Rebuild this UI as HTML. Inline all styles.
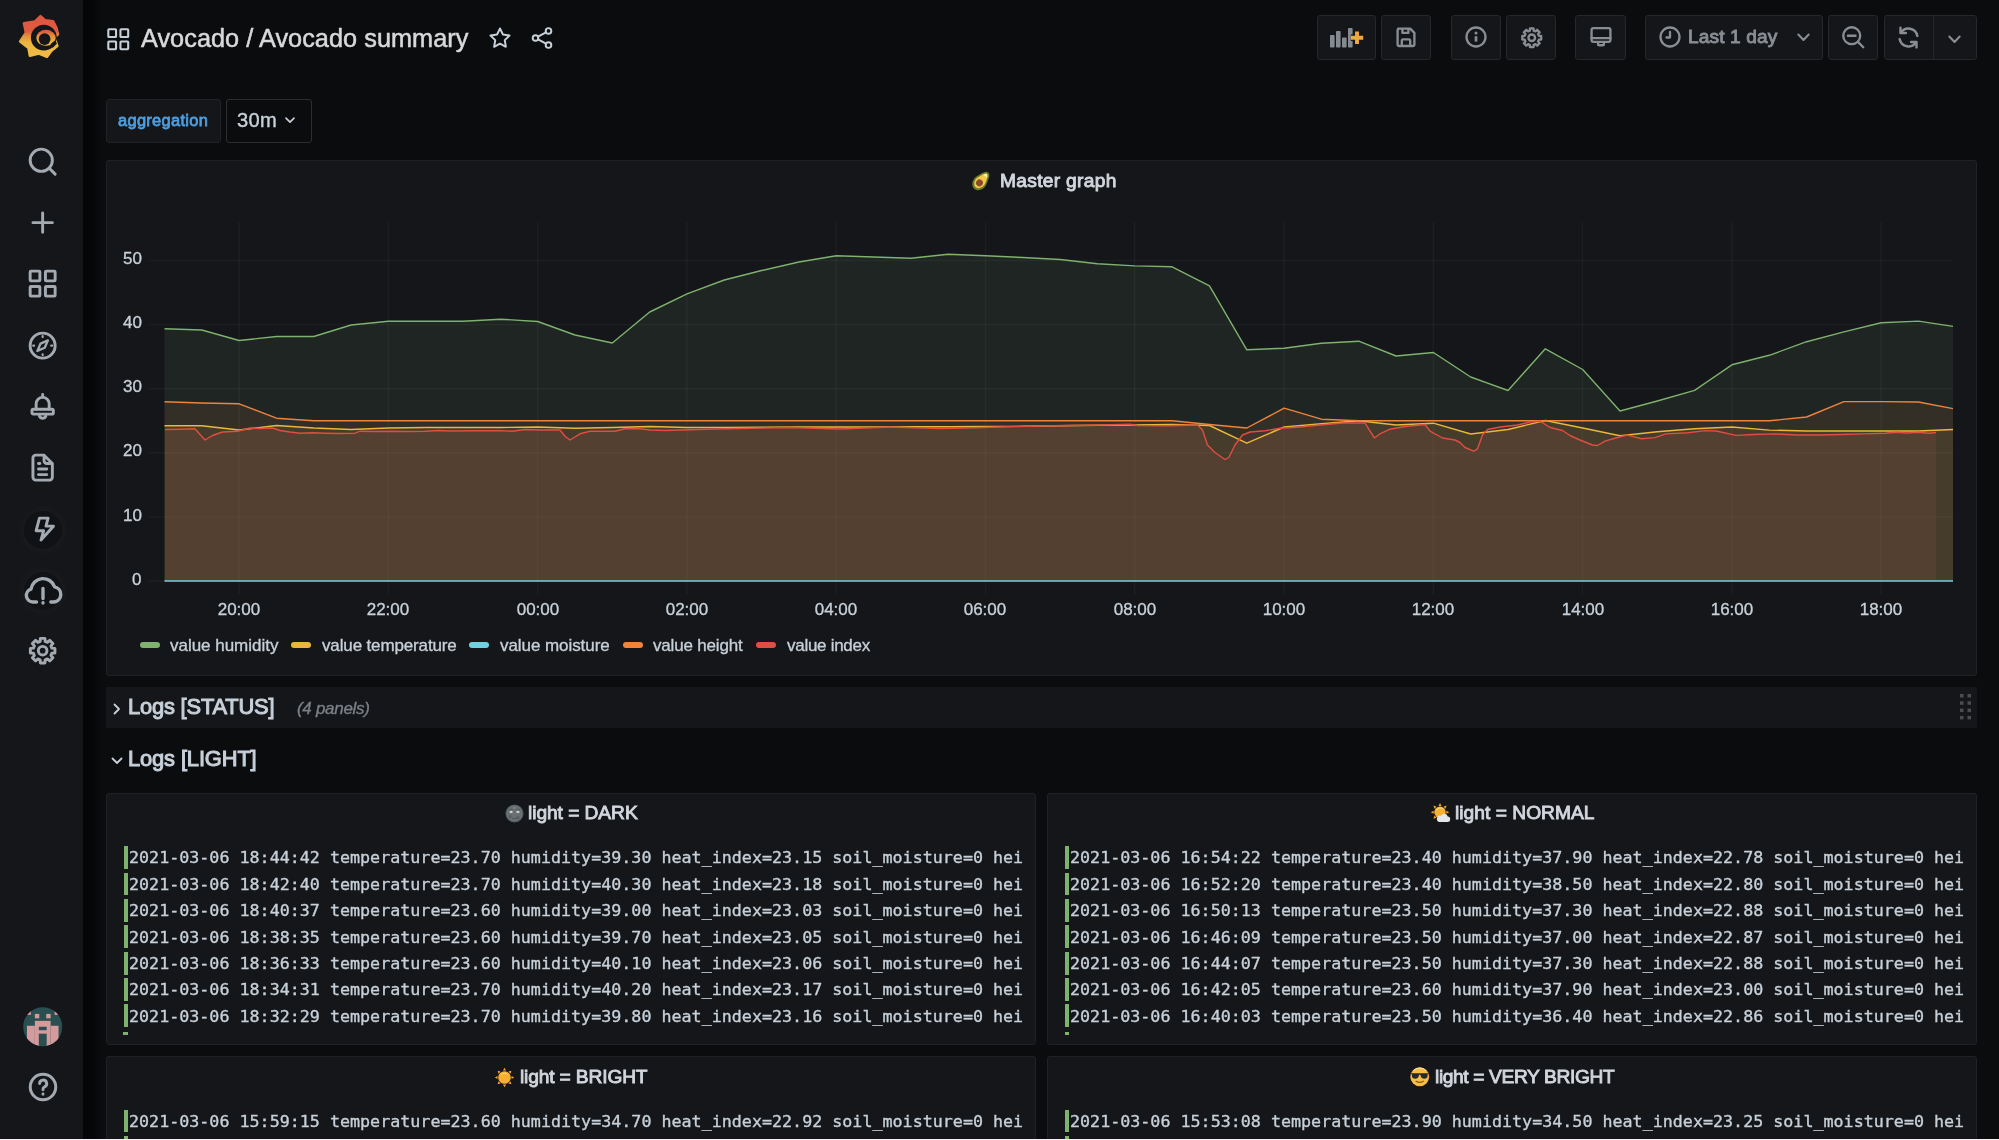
<!DOCTYPE html>
<html lang="en"><head><meta charset="utf-8"><title>Avocado / Avocado summary - Grafana</title>
<style>
*{box-sizing:border-box;margin:0;padding:0}
html,body{width:1999px;height:1140px;overflow:hidden;background:#0b0c0e;}
body{position:relative;font-family:"Liberation Sans", "DejaVu Sans", sans-serif;color:#c7d0d9;-webkit-font-smoothing:antialiased}
.abs{position:absolute}
#side{position:absolute;left:0;top:0;width:83px;height:1140px;background:#141619}
#shadow{position:absolute;left:83px;top:0;width:19px;height:1140px;background:linear-gradient(90deg,#050608 0,#050608 50%,#0b0c0e 100%)}
.panel{position:absolute;background:#141619;border:1px solid #1f2125;border-radius:3px}
.btn{position:absolute;top:15.2px;height:44.4px;background:#141619;border:1px solid #25272b;border-radius:3px}
.t{position:absolute;white-space:pre;line-height:1;will-change:transform}
svg{position:absolute;overflow:visible}
.ic{fill:none;stroke-linecap:round;stroke-linejoin:round}
.logrow{position:absolute;left:0;height:22.4px;white-space:pre;font-family:"DejaVu Sans Mono", "Liberation Mono", monospace;font-size:16.71px;line-height:22.4px;color:#c7d0d9;letter-spacing:0}
.logrow i{position:absolute;left:0.2px;top:-0.3px;width:4.4px;height:22.8px;background:#7eb26d}
.logrow span{position:absolute;left:5.6px;top:-0.1px;will-change:transform;-webkit-text-stroke:0.35px #c7d0d9}
</style></head>
<body>
<div id="side"></div><div id="shadow"></div>
<div class="abs" style="left:24px;top:511px;width:38px;height:38px;border-radius:50%;background:#111215;box-shadow:0 0 8px 4px rgba(255,255,255,0.025)"></div>
<div class="abs" style="left:24px;top:572px;width:38px;height:38px;border-radius:50%;background:#111215;box-shadow:0 0 8px 4px rgba(255,255,255,0.025)"></div>
<svg class="ic" style="left:26.2px;top:145.2px" width="33.3" height="33.3" viewBox="0 0 24 24" stroke="#a3aab2" stroke-width="2.1" ><circle cx="11" cy="11" r="8"/><path d="M16.8 16.8L21 21"/></svg>
<svg class="ic" style="left:26.2px;top:206.2px" width="33.3" height="33.3" viewBox="0 0 24 24" stroke="#a3aab2" stroke-width="2.1" ><path d="M12 5v14M5 12h14"/></svg>
<svg class="ic" style="left:26.2px;top:267.4px" width="33.3" height="33.3" viewBox="0 0 24 24" stroke="#a3aab2" stroke-width="2.1" ><rect x="3" y="3" width="7" height="7" rx="0.6"/><rect x="14" y="3" width="7" height="7" rx="0.6"/><rect x="3" y="14" width="7" height="7" rx="0.6"/><rect x="14" y="14" width="7" height="7" rx="0.6"/></svg>
<svg class="ic" style="left:26.2px;top:328.5px" width="33.3" height="33.3" viewBox="0 0 24 24" stroke="#a3aab2" stroke-width="2.1" ><circle cx="12" cy="12" r="9"/><path d="M15.8 8.2l-2.3 5.3-5.3 2.3 2.3-5.3z" stroke-width="1.7"/><path d="M12 5.2v.6M12 18.2v.6M5.2 12h.6M18.2 12h.6" stroke-width="1.6"/></svg>
<svg class="ic" style="left:26.2px;top:389.6px" width="33.3" height="33.3" viewBox="0 0 24 24" stroke="#a3aab2" stroke-width="2.1" ><path d="M7.300 13.800V10a4.700 4.700 0 0 1 9.400 0v3.800M12 5.200V3.200M9.700 18.800a2.500 2.500 0 0 0 4.600 0"/><rect x="4.300" y="13.900" width="15.400" height="3.500" rx="1"/></svg>
<svg class="ic" style="left:26.2px;top:450.7px" width="33.3" height="33.3" viewBox="0 0 24 24" stroke="#a3aab2" stroke-width="2.1" ><path d="M13 3H7a2 2 0 0 0-2 2v14a2 2 0 0 0 2 2h10a2 2 0 0 0 2-2V9zM13 3v4a2 2 0 0 0 2 2h4M9 13h6M9 17h6M9 9h1"/></svg>
<svg class="ic" style="left:26.2px;top:511.8px" width="33.3" height="33.3" viewBox="0 0 24 24" stroke="#a3aab2" stroke-width="2.1" ><path d="M9.7 4.4H15.9L14.4 10.2H19.8L10.8 20.2 12.700 13.500H7.300z"/></svg>
<svg class="ic" style="left:21px;top:576px" width="44" height="32" viewBox="0 0 44 32" stroke="#a3aab2" stroke-width="3.4"><path d="M15.500 26H11.800a6.600 6.600 0 0 1-1.800-12.900a12.200 12.200 0 0 1 23.600-2.300a7.700 7.700 0 0 1-.600 15.200H29.800M22 12.500v10M22 26.800v.2"/></svg>
<svg class="ic" style="left:26.2px;top:634.0px" width="33.3" height="33.3" viewBox="0 0 24 24" stroke="#a3aab2" stroke-width="2.1" ><circle cx="12" cy="12" r="3.1"/><path d="M10.21 5.34 L10.36 3.15 L13.64 3.15 L13.79 5.34 L15.45 6.02 L17.10 4.58 L19.42 6.90 L17.98 8.55 L18.66 10.21 L20.85 10.36 L20.85 13.64 L18.66 13.79 L17.98 15.45 L19.42 17.10 L17.10 19.42 L15.45 17.98 L13.79 18.66 L13.64 20.85 L10.36 20.85 L10.21 18.66 L8.55 17.98 L6.90 19.42 L4.58 17.10 L6.02 15.45 L5.34 13.79 L3.15 13.64 L3.15 10.36 L5.34 10.21 L6.02 8.55 L4.58 6.90 L6.90 4.58 L8.55 6.02Z"/></svg>
<svg class="ic" style="left:26.1px;top:1069.5px" width="34.0" height="34.0" viewBox="0 0 24 24" stroke="#a3aab2" stroke-width="2.1" ><circle cx="12" cy="12" r="9"/><path d="M9.6 9.600a2.500 2.500 0 1 1 3.500 2.300c-.700.300-1.100.900-1.100 1.600v.400M12 17v.200"/></svg>
<svg style="left:23.4px;top:1007.4px" width="39.5" height="39.5" viewBox="0 0 40 40">
<defs><clipPath id="avc"><circle cx="20" cy="20" r="19.8"/></clipPath></defs>
<g clip-path="url(#avc)"><rect width="40" height="40" fill="#2a4f50"/>
<rect x="4" y="19" width="8" height="21" fill="#d59a9c"/><rect x="28" y="19" width="8" height="21" fill="#d59a9c"/>
<rect x="12" y="14" width="16" height="26" fill="#d59a9c"/><rect x="16" y="20" width="8" height="3.500" fill="#2a4f50"/><rect x="16" y="27" width="8" height="13" fill="#2a4f50"/>
<rect x="12" y="7" width="4.500" height="4.500" fill="#d59a9c"/><rect x="23.500" y="7" width="4.500" height="4.500" fill="#d59a9c"/>
<rect x="4" y="4" width="4" height="4" fill="#d59a9c"/><rect x="32" y="4" width="4" height="4" fill="#d59a9c"/>
</g></svg>
<svg style="left:10px;top:8px" width="60" height="60" viewBox="0 0 60 60"><defs><linearGradient id="lg" gradientUnits="userSpaceOnUse" x1="0" y1="7" x2="0" y2="50"><stop offset="0" stop-color="#de5640"/><stop offset="0.38" stop-color="#df5c40"/><stop offset="0.5" stop-color="#e3923d"/><stop offset="0.64" stop-color="#ecb543"/><stop offset="1" stop-color="#f0bc43"/></linearGradient></defs><path d="M30.5 8.2 L35.3 12.4 L43.0 13.2 L46.3 19.5 L48.0 26.2 L44.2 29.3 L47.3 38.0 L41.4 42.8 L37.0 48.8 L28.9 45.6 L19.9 47.7 L18.5 40.0 L10.2 33.4 L15.9 24.8 L14.0 15.3 L24.8 13.6Z" fill="url(#lg)" stroke="url(#lg)" stroke-width="2.6" stroke-linejoin="round"/><circle cx="33.8" cy="29.7" r="12.9" fill="#141619"/><ellipse cx="36.0" cy="29.8" rx="9.7" ry="8" fill="url(#lg)"/><circle cx="34.6" cy="31.1" r="5.9" fill="#141619"/><path d="M40.5 36l4.500-3.500 2 3-4.500 4.500z" fill="#141619"/></svg>
<svg class="ic" style="left:104.800px;top:25.500px" width="26.500" height="26.500" viewBox="0 0 24 24" stroke="#c7d0d9" stroke-width="1.9"><rect x="3" y="3" width="7" height="7" rx="0.6"/><rect x="14" y="3" width="7" height="7" rx="0.6"/><rect x="3" y="14" width="7" height="7" rx="0.6"/><rect x="14" y="14" width="7" height="7" rx="0.6"/></svg>
<div class="t" id="title" style="left:141.00px;top:26.48px;font-size:25.30px;-webkit-text-stroke:0.51px #d8d9da;color:#d8d9da;letter-spacing:0.029px;">Avocado / Avocado summary</div>
<svg class="ic" style="left:486.500px;top:24.500px" width="26" height="26" viewBox="0 0 24 24" stroke="#c7d0d9" stroke-width="1.800"><path d="M12 3.200l2.700 5.600 6.100.900-4.400 4.300 1 6.100L12 17.200l-5.400 2.900 1-6.100L3.200 9.700l6.100-.900z"/></svg>
<svg class="ic" style="left:528.500px;top:24.500px" width="26" height="26" viewBox="0 0 24 24" stroke="#c7d0d9" stroke-width="1.800"><circle cx="18" cy="5.500" r="2.600"/><circle cx="6" cy="12" r="2.600"/><circle cx="18" cy="18.500" r="2.600"/><path d="M8.300 10.800l7.400-4M8.300 13.200l7.400 4"/></svg>
<div class="btn" style="left:1317.3px;width:58.7px;"></div>
<div class="btn" style="left:1381.3px;width:49.9px;"></div>
<div class="btn" style="left:1451.0px;width:49.6px;"></div>
<div class="btn" style="left:1506.2px;width:50.0px;"></div>
<div class="btn" style="left:1575.3px;width:50.5px;"></div>
<div class="btn" style="left:1645.2px;width:177.8px;"></div>
<div class="btn" style="left:1828.3px;width:49.7px;"></div>
<div class="btn" style="left:1884.0px;width:92.7px;"></div>
<div class="abs" style="left:1932.500px;top:16px;width:1px;height:43px;background:#25272b"></div>
<svg style="left:1329.800px;top:27.500px" width="34" height="20" viewBox="0 0 34 20"><g fill="#858a90"><rect x="0" y="7" width="4.600" height="12.500" rx="0.800"/><rect x="6" y="3" width="4.600" height="16.500" rx="0.800"/><rect x="12" y="9.500" width="4.600" height="10" rx="0.800"/><rect x="18" y="0" width="4.600" height="19.500" rx="0.800"/></g><path d="M27 3.600v12.400M20.800 9.800h12.400" stroke="#141619" stroke-width="6.400" fill="none"/><path d="M27 3.600v12.400M20.800 9.800h12.400" stroke="#f0a93c" stroke-width="3.900" fill="none"/></svg>
<svg class="ic" style="left:1394.3px;top:25.3px" width="24.0" height="24.0" viewBox="0 0 24 24" stroke="#898e94" stroke-width="1.95" ><path d="M5.500 5h10l3.500 3.500V18a1.500 1.500 0 0 1-1.500 1.500h-11A1.500 1.500 0 0 1 5 18V6.500A1.500 1.500 0 0 1 6.500 5zM9 5v3.500h5V5M8.500 19.500V15a1 1 0 0 1 1-1h5a1 1 0 0 1 1 1v4.500" transform="translate(-2.400 -2.400) scale(1.200)"/></svg>
<svg class="ic" style="left:1463.8px;top:25.4px" width="24.0" height="24.0" viewBox="0 0 24 24" stroke="#898e94" stroke-width="2.3" ><circle cx="12" cy="12" r="9.500"/><path d="M12 11.200v5.400" stroke-width="2.700" stroke-linecap="butt"/><circle cx="12" cy="8.100" r="1.500" fill="#898e94" stroke="none"/></svg>
<svg class="ic" style="left:1518.5px;top:24.6px" width="25.5" height="25.5" viewBox="0 0 24 24" stroke="#898e94" stroke-width="2.25" ><circle cx="12" cy="12" r="3.1"/><path d="M10.21 5.34 L10.36 3.15 L13.64 3.15 L13.79 5.34 L15.45 6.02 L17.10 4.58 L19.42 6.90 L17.98 8.55 L18.66 10.21 L20.85 10.36 L20.85 13.64 L18.66 13.79 L17.98 15.45 L19.42 17.10 L17.10 19.42 L15.45 17.98 L13.79 18.66 L13.64 20.85 L10.36 20.85 L10.21 18.66 L8.55 17.98 L6.90 19.42 L4.58 17.10 L6.02 15.45 L5.34 13.79 L3.15 13.64 L3.15 10.36 L5.34 10.21 L6.02 8.55 L4.58 6.90 L6.90 4.58 L8.55 6.02Z"/></svg>
<svg class="ic" style="left:1587.5px;top:24.4px" width="26.0" height="26.0" viewBox="0 0 24 24" stroke="#898e94" stroke-width="2.15" ><rect x="3.300" y="3.800" width="17.400" height="12.700" rx="1.700"/><path d="M3.300 13.100h17.400M9.300 16.700v1.900a1 1 0 0 0 1 1h3.400a1 1 0 0 0 1-1v-1.900"/></svg>
<svg class="ic" style="left:1657.8px;top:25.4px" width="24.0" height="24.0" viewBox="0 0 24 24" stroke="#898e94" stroke-width="2.3" ><circle cx="12" cy="12" r="9.500"/><path d="M12 7v5.500H8.500"/></svg>
<div class="t" id="last" style="left:1688.00px;top:27.03px;font-size:19.10px;-webkit-text-stroke:0.90px #898e94;color:#898e94;letter-spacing:0.132px;">Last 1 day</div>
<svg class="ic" style="left:1797px;top:33px" width="13" height="9" viewBox="0 0 13 9" stroke="#898e94" stroke-width="2"><path d="M1.300 1.500l5.200 5.500 5.200-5.500"/></svg>
<svg class="ic" style="left:1841.0px;top:25.1px" width="24.5" height="24.5" viewBox="0 0 24 24" stroke="#898e94" stroke-width="2.3" ><circle cx="10.500" cy="10.500" r="8.300"/><path d="M6.800 10.500h7.400M16.600 16.600L21.800 21.800"/></svg>
<svg class="ic" style="left:1895.8px;top:24.6px" width="25.0" height="25.0" viewBox="0 0 24 24" stroke="#898e94" stroke-width="2.3" ><path d="M20.500 10.500A8.700 8.700 0 0 0 4.600 7.500M4.300 2.500v5.200h5.200M3.500 13.500a8.700 8.700 0 0 0 15.900 3M19.700 21.500v-5.200h-5.200"/></svg>
<svg class="ic" style="left:1948px;top:34.500px" width="13" height="9" viewBox="0 0 13 9" stroke="#898e94" stroke-width="2"><path d="M1.300 1.500l5.200 5.500 5.200-5.500"/></svg>
<div class="abs" style="left:106px;top:99px;width:114.500px;height:43.500px;background:#141619;border:1px solid #202226;border-radius:3px"></div>
<div class="t" id="aggr" style="left:117.60px;top:112.49px;font-size:16.43px;-webkit-text-stroke:0.77px #4e9fe0;color:#4e9fe0;letter-spacing:0.305px;">aggregation</div>
<div class="abs" style="left:226.400px;top:99px;width:85.800px;height:43.500px;background:#0b0c0e;border:1px solid #2c2e31;border-radius:3px"></div>
<div class="t" id="v30" style="left:237.30px;top:110.28px;font-size:20.10px;-webkit-text-stroke:0.40px #c7d0d9;color:#c7d0d9;letter-spacing:0.353px;">30m</div>
<svg class="ic" style="left:285px;top:117px" width="10" height="7" viewBox="0 0 10 7" stroke="#c7d0d9" stroke-width="1.700"><path d="M1 1.200l4 4 4-4"/></svg>
<div class="panel" style="left:106px;top:160px;width:1871px;height:515.500px"></div>
<svg style="left:969.500px;top:168.500px" width="22.500" height="23.500" viewBox="0 0 21 22">
<g transform="rotate(40 10.5 11)"><path d="M10.5 0.800c2.400 0 3.500 2.600 4.400 5.400 1.300 3.600 2.600 5.800 1.700 9.300-.900 3.400-3.300 5.500-6.100 5.500s-5.200-2.100-6.100-5.500c-.900-3.500.400-5.700 1.700-9.300C7 3.400 8.100 .800 10.500 .800z" fill="#6b7a2a"/><path d="M10.500 2.600c1.700 0 2.500 2.200 3.200 4.300 1 3 2.100 4.900 1.400 7.700-.700 2.700-2.500 4.400-4.600 4.400s-3.900-1.700-4.600-4.400c-.700-2.800.400-4.700 1.400-7.700.700-2.100 1.500-4.300 3.200-4.300z" fill="#f3c74a"/><path d="M10.500 3.200c1 0 1.600 1.400 2 2.600-1.200-.500-2.800-.500-4 0 .400-1.200 1-2.600 2-2.600z" fill="#faf3c8"/><circle cx="10.500" cy="13.600" r="3.200" fill="#8a4b2a"/></g></svg>
<div class="t" id="mg" style="left:999.80px;top:170.95px;font-size:19.20px;-webkit-text-stroke:0.90px #d2d6dd;color:#d2d6dd;letter-spacing:0.296px;">Master graph</div>
<svg id="chart" style="left:0;top:0" width="1999" height="700" viewBox="0 0 1999 700"><path d="M148.4 581.0H1953" stroke="#c7d0d9" stroke-opacity="0.052" stroke-width="1.400"/><path d="M148.4 516.9H1953" stroke="#c7d0d9" stroke-opacity="0.052" stroke-width="1.400"/><path d="M148.4 452.8H1953" stroke="#c7d0d9" stroke-opacity="0.052" stroke-width="1.400"/><path d="M148.4 388.7H1953" stroke="#c7d0d9" stroke-opacity="0.052" stroke-width="1.400"/><path d="M148.4 324.6H1953" stroke="#c7d0d9" stroke-opacity="0.052" stroke-width="1.400"/><path d="M148.4 260.5H1953" stroke="#c7d0d9" stroke-opacity="0.052" stroke-width="1.400"/><path d="M239.1 222.300V594.500" stroke="#c7d0d9" stroke-opacity="0.052" stroke-width="1.400"/><path d="M388.4 222.300V594.500" stroke="#c7d0d9" stroke-opacity="0.052" stroke-width="1.400"/><path d="M537.6 222.300V594.500" stroke="#c7d0d9" stroke-opacity="0.052" stroke-width="1.400"/><path d="M686.9 222.300V594.500" stroke="#c7d0d9" stroke-opacity="0.052" stroke-width="1.400"/><path d="M836.2 222.300V594.500" stroke="#c7d0d9" stroke-opacity="0.052" stroke-width="1.400"/><path d="M985.5 222.300V594.500" stroke="#c7d0d9" stroke-opacity="0.052" stroke-width="1.400"/><path d="M1134.7 222.300V594.500" stroke="#c7d0d9" stroke-opacity="0.052" stroke-width="1.400"/><path d="M1284.0 222.300V594.500" stroke="#c7d0d9" stroke-opacity="0.052" stroke-width="1.400"/><path d="M1433.3 222.300V594.500" stroke="#c7d0d9" stroke-opacity="0.052" stroke-width="1.400"/><path d="M1582.5 222.300V594.500" stroke="#c7d0d9" stroke-opacity="0.052" stroke-width="1.400"/><path d="M1731.8 222.300V594.500" stroke="#c7d0d9" stroke-opacity="0.052" stroke-width="1.400"/><path d="M1881.1 222.300V594.500" stroke="#c7d0d9" stroke-opacity="0.052" stroke-width="1.400"/><path d="M164.5 328.8 L201.8 330.0 L239.1 340.5 L276.5 336.5 L313.8 336.5 L351.1 325.0 L388.4 321.2 L425.7 321.2 L463.1 321.2 L500.4 319.2 L537.7 321.5 L575.0 335.0 L612.3 343.0 L649.7 312.0 L687.0 293.8 L724.3 280.0 L761.6 270.5 L798.9 262.0 L836.3 255.8 L873.6 257.0 L910.9 258.2 L948.2 254.2 L985.5 255.8 L1022.9 257.5 L1060.2 259.5 L1097.5 263.8 L1134.8 265.9 L1172.1 266.8 L1209.5 285.8 L1246.8 349.8 L1284.1 348.2 L1321.4 343.2 L1358.7 341.2 L1396.1 356.0 L1433.4 352.5 L1470.7 377.0 L1508.0 390.5 L1545.3 348.8 L1582.7 369.5 L1620.0 411.0 L1657.3 401.0 L1694.6 390.4 L1731.9 364.8 L1769.3 355.3 L1806.6 341.7 L1843.9 331.9 L1881.2 322.7 L1918.5 321.1 L1953.0 326.4 L1953.0 581.0 L164.5 581.0Z" fill="#7eb280" fill-opacity="0.100" stroke="none"/><path d="M164.5 425.8 L201.8 425.8 L239.1 430.0 L276.5 425.5 L313.8 428.0 L351.1 429.5 L388.4 428.0 L425.7 427.5 L463.1 427.5 L500.4 427.5 L537.7 427.0 L575.0 428.2 L612.3 427.5 L649.7 426.5 L687.0 427.5 L724.3 427.4 L761.6 427.2 L798.9 427.0 L836.3 427.0 L873.6 427.0 L910.9 426.8 L948.2 426.8 L985.5 426.5 L1022.9 426.3 L1060.2 425.8 L1097.5 425.3 L1134.8 425.0 L1172.1 424.5 L1209.5 425.5 L1246.8 443.2 L1284.1 427.0 L1321.4 423.8 L1358.7 420.8 L1396.1 425.0 L1433.4 423.2 L1470.7 434.0 L1508.0 429.5 L1545.3 420.5 L1582.7 428.0 L1620.0 435.8 L1657.3 431.7 L1694.6 428.8 L1731.9 427.0 L1769.3 430.1 L1806.6 431.0 L1843.9 431.0 L1881.2 431.0 L1918.5 431.0 L1953.0 429.5 L1953.0 581.0 L164.5 581.0Z" fill="#eab84c" fill-opacity="0.100" stroke="none"/><path d="M164.5 581.0 L1953.0 581.0 L1953.0 581.0 L164.5 581.0Z" fill="#6ed0e0" fill-opacity="0.100" stroke="none"/><path d="M164.5 401.8 L201.8 403.0 L239.1 403.8 L276.5 418.2 L313.8 420.8 L351.1 420.8 L388.4 420.8 L425.7 420.8 L463.1 420.8 L500.4 420.8 L537.7 420.8 L575.0 420.8 L612.3 420.8 L649.7 420.8 L687.0 420.8 L724.3 420.8 L761.6 420.8 L798.9 420.8 L836.3 420.8 L873.6 420.8 L910.9 420.8 L948.2 420.8 L985.5 420.8 L1022.9 420.8 L1060.2 420.8 L1097.5 420.8 L1134.8 420.8 L1172.1 420.8 L1209.5 424.5 L1246.8 428.0 L1284.1 408.2 L1321.4 419.2 L1358.7 420.8 L1396.1 420.8 L1433.4 420.8 L1470.7 420.8 L1508.0 420.8 L1545.3 420.8 L1582.7 420.8 L1620.0 420.8 L1657.3 420.8 L1694.6 420.8 L1731.9 420.8 L1769.3 420.8 L1806.6 417.0 L1843.9 401.6 L1881.2 401.6 L1918.5 402.0 L1953.0 408.6 L1953.0 581.0 L164.5 581.0Z" fill="#ef8852" fill-opacity="0.100" stroke="none"/><path d="M165.0 429.5 L180.0 429.2 L195.0 428.8 L200.0 434.5 L205.0 440.0 L212.5 435.5 L222.5 432.0 L237.5 431.2 L250.0 428.0 L260.0 428.5 L272.5 428.0 L280.0 430.5 L290.0 432.0 L300.0 433.2 L312.5 432.8 L325.0 433.2 L340.0 433.5 L355.0 433.2 L360.0 431.2 L375.0 431.5 L390.0 431.2 L407.5 431.5 L425.0 431.2 L437.5 430.5 L450.0 431.0 L475.0 430.8 L500.0 430.8 L512.5 431.2 L525.0 429.5 L540.0 430.0 L560.0 430.0 L565.0 436.2 L570.0 440.0 L580.0 433.8 L590.0 431.2 L615.0 431.2 L625.0 428.8 L640.0 428.8 L650.0 430.0 L665.0 430.5 L715.0 429.0 L790.0 427.5 L840.0 429.0 L890.0 427.0 L940.0 428.5 L965.0 428.0 L1015.0 426.5 L1065.0 425.5 L1102.5 425.0 L1130.0 424.2 L1137.5 425.5 L1167.5 425.8 L1197.5 425.0 L1202.5 430.0 L1207.5 445.0 L1215.0 452.5 L1225.0 459.5 L1228.8 457.5 L1235.0 445.0 L1242.5 435.0 L1250.0 432.0 L1265.0 430.8 L1280.0 428.2 L1300.0 427.0 L1320.0 425.0 L1342.5 423.0 L1365.0 423.0 L1370.0 431.2 L1374.5 438.0 L1380.0 433.8 L1390.0 429.2 L1405.0 426.5 L1425.0 424.5 L1430.0 431.2 L1442.5 438.0 L1455.0 440.0 L1460.0 442.5 L1465.0 447.5 L1473.8 451.2 L1477.5 448.8 L1482.5 435.0 L1487.5 429.5 L1500.0 427.0 L1517.5 425.0 L1530.0 422.0 L1540.0 421.2 L1550.0 427.5 L1562.5 430.5 L1570.0 435.5 L1580.0 440.0 L1592.5 445.0 L1597.5 445.5 L1605.0 441.2 L1617.5 437.5 L1627.5 435.0 L1628.5 435.4 L1641.7 438.7 L1654.8 437.6 L1665.8 433.9 L1687.7 432.8 L1705.3 430.6 L1716.3 431.0 L1736.0 435.4 L1753.5 434.5 L1775.5 433.9 L1797.4 435.0 L1819.3 435.0 L1841.3 434.5 L1863.2 433.9 L1885.2 433.2 L1896.1 432.3 L1907.1 433.0 L1918.1 432.3 L1929.0 433.2 L1936.0 432.5 L1936.0 581.0 L165.0 581.0Z" fill="#dc6062" fill-opacity="0.100" stroke="none"/><path d="M164.5 328.8 L201.8 330.0 L239.1 340.5 L276.5 336.5 L313.8 336.5 L351.1 325.0 L388.4 321.2 L425.7 321.2 L463.1 321.2 L500.4 319.2 L537.7 321.5 L575.0 335.0 L612.3 343.0 L649.7 312.0 L687.0 293.8 L724.3 280.0 L761.6 270.5 L798.9 262.0 L836.3 255.8 L873.6 257.0 L910.9 258.2 L948.2 254.2 L985.5 255.8 L1022.9 257.5 L1060.2 259.5 L1097.5 263.8 L1134.8 265.9 L1172.1 266.8 L1209.5 285.8 L1246.8 349.8 L1284.1 348.2 L1321.4 343.2 L1358.7 341.2 L1396.1 356.0 L1433.4 352.5 L1470.7 377.0 L1508.0 390.5 L1545.3 348.8 L1582.7 369.5 L1620.0 411.0 L1657.3 401.0 L1694.6 390.4 L1731.9 364.8 L1769.3 355.3 L1806.6 341.7 L1843.9 331.9 L1881.2 322.7 L1918.5 321.1 L1953.0 326.4" fill="none" stroke="#7eb26d" stroke-width="1.400" stroke-linejoin="round"/><path d="M164.5 425.8 L201.8 425.8 L239.1 430.0 L276.5 425.5 L313.8 428.0 L351.1 429.5 L388.4 428.0 L425.7 427.5 L463.1 427.5 L500.4 427.5 L537.7 427.0 L575.0 428.2 L612.3 427.5 L649.7 426.5 L687.0 427.5 L724.3 427.4 L761.6 427.2 L798.9 427.0 L836.3 427.0 L873.6 427.0 L910.9 426.8 L948.2 426.8 L985.5 426.5 L1022.9 426.3 L1060.2 425.8 L1097.5 425.3 L1134.8 425.0 L1172.1 424.5 L1209.5 425.5 L1246.8 443.2 L1284.1 427.0 L1321.4 423.8 L1358.7 420.8 L1396.1 425.0 L1433.4 423.2 L1470.7 434.0 L1508.0 429.5 L1545.3 420.5 L1582.7 428.0 L1620.0 435.8 L1657.3 431.7 L1694.6 428.8 L1731.9 427.0 L1769.3 430.1 L1806.6 431.0 L1843.9 431.0 L1881.2 431.0 L1918.5 431.0 L1953.0 429.5" fill="none" stroke="#eab839" stroke-width="1.400" stroke-linejoin="round"/><path d="M164.5 581.0 L1953.0 581.0" fill="none" stroke="#6ed0e0" stroke-width="1.400" stroke-linejoin="round"/><path d="M164.5 401.8 L201.8 403.0 L239.1 403.8 L276.5 418.2 L313.8 420.8 L351.1 420.8 L388.4 420.8 L425.7 420.8 L463.1 420.8 L500.4 420.8 L537.7 420.8 L575.0 420.8 L612.3 420.8 L649.7 420.8 L687.0 420.8 L724.3 420.8 L761.6 420.8 L798.9 420.8 L836.3 420.8 L873.6 420.8 L910.9 420.8 L948.2 420.8 L985.5 420.8 L1022.9 420.8 L1060.2 420.8 L1097.5 420.8 L1134.8 420.8 L1172.1 420.8 L1209.5 424.5 L1246.8 428.0 L1284.1 408.2 L1321.4 419.2 L1358.7 420.8 L1396.1 420.8 L1433.4 420.8 L1470.7 420.8 L1508.0 420.8 L1545.3 420.8 L1582.7 420.8 L1620.0 420.8 L1657.3 420.8 L1694.6 420.8 L1731.9 420.8 L1769.3 420.8 L1806.6 417.0 L1843.9 401.6 L1881.2 401.6 L1918.5 402.0 L1953.0 408.6" fill="none" stroke="#ef843c" stroke-width="1.400" stroke-linejoin="round"/><path d="M165.0 429.5 L180.0 429.2 L195.0 428.8 L200.0 434.5 L205.0 440.0 L212.5 435.5 L222.5 432.0 L237.5 431.2 L250.0 428.0 L260.0 428.5 L272.5 428.0 L280.0 430.5 L290.0 432.0 L300.0 433.2 L312.5 432.8 L325.0 433.2 L340.0 433.5 L355.0 433.2 L360.0 431.2 L375.0 431.5 L390.0 431.2 L407.5 431.5 L425.0 431.2 L437.5 430.5 L450.0 431.0 L475.0 430.8 L500.0 430.8 L512.5 431.2 L525.0 429.5 L540.0 430.0 L560.0 430.0 L565.0 436.2 L570.0 440.0 L580.0 433.8 L590.0 431.2 L615.0 431.2 L625.0 428.8 L640.0 428.8 L650.0 430.0 L665.0 430.5 L715.0 429.0 L790.0 427.5 L840.0 429.0 L890.0 427.0 L940.0 428.5 L965.0 428.0 L1015.0 426.5 L1065.0 425.5 L1102.5 425.0 L1130.0 424.2 L1137.5 425.5 L1167.5 425.8 L1197.5 425.0 L1202.5 430.0 L1207.5 445.0 L1215.0 452.5 L1225.0 459.5 L1228.8 457.5 L1235.0 445.0 L1242.5 435.0 L1250.0 432.0 L1265.0 430.8 L1280.0 428.2 L1300.0 427.0 L1320.0 425.0 L1342.5 423.0 L1365.0 423.0 L1370.0 431.2 L1374.5 438.0 L1380.0 433.8 L1390.0 429.2 L1405.0 426.5 L1425.0 424.5 L1430.0 431.2 L1442.5 438.0 L1455.0 440.0 L1460.0 442.5 L1465.0 447.5 L1473.8 451.2 L1477.5 448.8 L1482.5 435.0 L1487.5 429.5 L1500.0 427.0 L1517.5 425.0 L1530.0 422.0 L1540.0 421.2 L1550.0 427.5 L1562.5 430.5 L1570.0 435.5 L1580.0 440.0 L1592.5 445.0 L1597.5 445.5 L1605.0 441.2 L1617.5 437.5 L1627.5 435.0 L1628.5 435.4 L1641.7 438.7 L1654.8 437.6 L1665.8 433.9 L1687.7 432.8 L1705.3 430.6 L1716.3 431.0 L1736.0 435.4 L1753.5 434.5 L1775.5 433.9 L1797.4 435.0 L1819.3 435.0 L1841.3 434.5 L1863.2 433.9 L1885.2 433.2 L1896.1 432.3 L1907.1 433.0 L1918.1 432.3 L1929.0 433.2 L1936.0 432.5" fill="none" stroke="#e24d42" stroke-width="1.400" stroke-linejoin="round"/></svg>
<div class="t" id="yl0" style="right:1857.20px;top:570.61px;font-size:17.00px;-webkit-text-stroke:0.34px #c7d0d9;color:#c7d0d9;letter-spacing:0.000px;">0</div>
<div class="t" id="yl10" style="right:1857.20px;top:506.51px;font-size:17.00px;-webkit-text-stroke:0.34px #c7d0d9;color:#c7d0d9;letter-spacing:0.000px;">10</div>
<div class="t" id="yl20" style="right:1857.20px;top:442.41px;font-size:17.00px;-webkit-text-stroke:0.34px #c7d0d9;color:#c7d0d9;letter-spacing:0.000px;">20</div>
<div class="t" id="yl30" style="right:1857.20px;top:378.31px;font-size:17.00px;-webkit-text-stroke:0.34px #c7d0d9;color:#c7d0d9;letter-spacing:0.000px;">30</div>
<div class="t" id="yl40" style="right:1857.20px;top:314.21px;font-size:17.00px;-webkit-text-stroke:0.34px #c7d0d9;color:#c7d0d9;letter-spacing:0.000px;">40</div>
<div class="t" id="yl50" style="right:1857.20px;top:250.11px;font-size:17.00px;-webkit-text-stroke:0.34px #c7d0d9;color:#c7d0d9;letter-spacing:0.000px;">50</div>
<div class="t" id="xl0" style="left:139.11px;width:200px;text-align:center;top:600.61px;font-size:17.00px;-webkit-text-stroke:0.34px #c7d0d9;color:#c7d0d9;letter-spacing:0.013px;">20:00</div>
<div class="t" id="xl1" style="left:288.38px;width:200px;text-align:center;top:600.61px;font-size:17.00px;-webkit-text-stroke:0.34px #c7d0d9;color:#c7d0d9;letter-spacing:0.013px;">22:00</div>
<div class="t" id="xl2" style="left:437.65px;width:200px;text-align:center;top:600.61px;font-size:17.00px;-webkit-text-stroke:0.34px #c7d0d9;color:#c7d0d9;letter-spacing:0.013px;">00:00</div>
<div class="t" id="xl3" style="left:586.92px;width:200px;text-align:center;top:600.61px;font-size:17.00px;-webkit-text-stroke:0.34px #c7d0d9;color:#c7d0d9;letter-spacing:0.013px;">02:00</div>
<div class="t" id="xl4" style="left:736.19px;width:200px;text-align:center;top:600.61px;font-size:17.00px;-webkit-text-stroke:0.34px #c7d0d9;color:#c7d0d9;letter-spacing:0.013px;">04:00</div>
<div class="t" id="xl5" style="left:885.46px;width:200px;text-align:center;top:600.61px;font-size:17.00px;-webkit-text-stroke:0.34px #c7d0d9;color:#c7d0d9;letter-spacing:0.013px;">06:00</div>
<div class="t" id="xl6" style="left:1034.73px;width:200px;text-align:center;top:600.61px;font-size:17.00px;-webkit-text-stroke:0.34px #c7d0d9;color:#c7d0d9;letter-spacing:0.013px;">08:00</div>
<div class="t" id="xl7" style="left:1184.00px;width:200px;text-align:center;top:600.61px;font-size:17.00px;-webkit-text-stroke:0.34px #c7d0d9;color:#c7d0d9;letter-spacing:0.013px;">10:00</div>
<div class="t" id="xl8" style="left:1333.27px;width:200px;text-align:center;top:600.61px;font-size:17.00px;-webkit-text-stroke:0.34px #c7d0d9;color:#c7d0d9;letter-spacing:0.013px;">12:00</div>
<div class="t" id="xl9" style="left:1482.54px;width:200px;text-align:center;top:600.61px;font-size:17.00px;-webkit-text-stroke:0.34px #c7d0d9;color:#c7d0d9;letter-spacing:0.013px;">14:00</div>
<div class="t" id="xl10" style="left:1631.81px;width:200px;text-align:center;top:600.61px;font-size:17.00px;-webkit-text-stroke:0.34px #c7d0d9;color:#c7d0d9;letter-spacing:0.013px;">16:00</div>
<div class="t" id="xl11" style="left:1781.08px;width:200px;text-align:center;top:600.61px;font-size:17.00px;-webkit-text-stroke:0.34px #c7d0d9;color:#c7d0d9;letter-spacing:0.013px;">18:00</div>
<div class="abs" style="left:140.0px;top:642px;width:20px;height:6.4px;border-radius:3.2px;background:#7eb26d"></div>
<div class="t" id="lg0" style="left:169.90px;top:636.61px;font-size:17.00px;-webkit-text-stroke:0.34px #c7d0d9;color:#c7d0d9;letter-spacing:-0.021px;">value humidity</div>
<div class="abs" style="left:291.0px;top:642px;width:20px;height:6.4px;border-radius:3.2px;background:#eab839"></div>
<div class="t" id="lg1" style="left:321.50px;top:636.61px;font-size:17.00px;-webkit-text-stroke:0.34px #c7d0d9;color:#c7d0d9;letter-spacing:-0.139px;">value temperature</div>
<div class="abs" style="left:469.0px;top:642px;width:20px;height:6.4px;border-radius:3.2px;background:#6ed0e0"></div>
<div class="t" id="lg2" style="left:499.50px;top:636.61px;font-size:17.00px;-webkit-text-stroke:0.34px #c7d0d9;color:#c7d0d9;letter-spacing:-0.066px;">value moisture</div>
<div class="abs" style="left:622.5px;top:642px;width:20px;height:6.4px;border-radius:3.2px;background:#ef843c"></div>
<div class="t" id="lg3" style="left:652.50px;top:636.61px;font-size:17.00px;-webkit-text-stroke:0.34px #c7d0d9;color:#c7d0d9;letter-spacing:-0.181px;">value height</div>
<div class="abs" style="left:756.0px;top:642px;width:20px;height:6.4px;border-radius:3.2px;background:#e24d42"></div>
<div class="t" id="lg4" style="left:786.50px;top:636.61px;font-size:17.00px;-webkit-text-stroke:0.34px #c7d0d9;color:#c7d0d9;letter-spacing:-0.282px;">value index</div>
<div class="abs" style="left:106px;top:687.300px;width:1871px;height:41px;background:#141619"></div>
<svg class="ic" style="left:112.500px;top:702.500px" width="8" height="12" viewBox="0 0 8 12" stroke="#c7d0d9" stroke-width="1.800"><path d="M1.500 1.500l4.500 4.500-4.500 4.500"/></svg>
<div class="t" id="r1" style="left:127.60px;top:695.58px;font-size:21.87px;-webkit-text-stroke:1.03px #c7d0d9;color:#c7d0d9;letter-spacing:-0.176px;">Logs [STATUS]</div>
<div class="t" id="r1b" style="left:296.50px;top:700.31px;font-size:17.00px;-webkit-text-stroke:0.34px #7b8087;color:#7b8087;letter-spacing:-0.301px;font-style:italic;">(4 panels)</div>
<svg style="left:1960px;top:694.200px" width="12" height="26" viewBox="0 0 12 26" fill="#4a4c50"><rect x="0.0" y="0.0" width="3.500" height="3.500"/><rect x="7.5" y="0.0" width="3.500" height="3.500"/><rect x="0.0" y="7.3" width="3.500" height="3.500"/><rect x="7.5" y="7.3" width="3.500" height="3.500"/><rect x="0.0" y="14.6" width="3.500" height="3.500"/><rect x="7.5" y="14.6" width="3.500" height="3.500"/><rect x="0.0" y="21.9" width="3.500" height="3.500"/><rect x="7.5" y="21.9" width="3.500" height="3.500"/></svg>
<svg class="ic" style="left:111px;top:756.500px" width="12" height="8" viewBox="0 0 12 8" stroke="#c7d0d9" stroke-width="1.800"><path d="M1.500 1.500l4.500 4.500 4.500-4.500"/></svg>
<div class="t" id="r2" style="left:127.60px;top:748.38px;font-size:21.87px;-webkit-text-stroke:1.03px #c7d0d9;color:#c7d0d9;letter-spacing:-0.118px;">Logs [LIGHT]</div>
<div class="panel" style="left:106.0px;top:792.7px;width:929.500px;height:252.3px;overflow:hidden">
<svg style="left:397.5px;top:10px" width="19" height="19" viewBox="0 0 20 20"><circle cx="10" cy="10" r="9.6" fill="#3e5558"/><circle cx="10" cy="10" r="8.7" fill="#6a6f72"/><ellipse cx="6.4" cy="8.3" rx="1.7" ry="1.3" fill="#c9cbc4"/><ellipse cx="13.6" cy="8.3" rx="1.7" ry="1.3" fill="#c9cbc4"/><circle cx="6.6" cy="8.4" r="0.6" fill="#e8e3a0"/><circle cx="13.4" cy="8.4" r="0.6" fill="#e8e3a0"/><path d="M4.3 6.2c1.2-.9 2.700-.9 3.900 0M11.800 6.200c1.200-.900 2.700-.900 3.900 0" stroke="#4d5254" stroke-width="1" fill="none"/><circle cx="5.5" cy="13.2" r="1.8" fill="#5b6063"/><circle cx="13.5" cy="14.6" r="2.1" fill="#5b6063"/><circle cx="10" cy="4" r="1.4" fill="#7a7f82"/><path d="M7.300 14.800c1.700.900 3.700.900 5.400 0" stroke="#4d5254" stroke-width="1" fill="none"/></svg>
<div class="t" id="lt1" style="left:421.30px;top:9.55px;font-size:19.20px;-webkit-text-stroke:0.90px #d2d6dd;color:#d2d6dd;letter-spacing:-0.061px;">light = DARK</div>
<div class="logrow" style="left:16.4px;top:52.8px"><i></i><span>2021-03-06 18:44:42 temperature=23.70 humidity=39.30 heat_index=23.15 soil_moisture=0 hei</span></div>
<div class="logrow" style="left:16.4px;top:79.2px"><i></i><span>2021-03-06 18:42:40 temperature=23.70 humidity=40.30 heat_index=23.18 soil_moisture=0 hei</span></div>
<div class="logrow" style="left:16.4px;top:105.6px"><i></i><span>2021-03-06 18:40:37 temperature=23.60 humidity=39.00 heat_index=23.03 soil_moisture=0 hei</span></div>
<div class="logrow" style="left:16.4px;top:132.0px"><i></i><span>2021-03-06 18:38:35 temperature=23.60 humidity=39.70 heat_index=23.05 soil_moisture=0 hei</span></div>
<div class="logrow" style="left:16.4px;top:158.4px"><i></i><span>2021-03-06 18:36:33 temperature=23.60 humidity=40.10 heat_index=23.06 soil_moisture=0 hei</span></div>
<div class="logrow" style="left:16.4px;top:184.8px"><i></i><span>2021-03-06 18:34:31 temperature=23.70 humidity=40.20 heat_index=23.17 soil_moisture=0 hei</span></div>
<div class="logrow" style="left:16.4px;top:211.1px"><i></i><span>2021-03-06 18:32:29 temperature=23.70 humidity=39.80 heat_index=23.16 soil_moisture=0 hei</span></div>
<div class="abs" style="left:16.400px;top:238.7px;width:4.500px;height:2.500px;background:#7eb26d"></div>
</div>
<div class="panel" style="left:1047.2px;top:792.7px;width:929.500px;height:252.3px;overflow:hidden">
<svg style="left:382.4px;top:10px" width="20" height="19" viewBox="0 0 20 19"><path d="M9.00 -1.10L10.50 1.90L7.50 1.90ZM15.58 1.62L14.52 4.81L12.39 2.68ZM18.30 8.20L15.30 9.70L15.30 6.70ZM9.00 17.50L7.50 14.50L10.50 14.50ZM2.42 14.78L3.48 11.59L5.61 13.72ZM-0.30 8.20L2.70 6.70L2.70 9.70ZM2.42 1.62L5.61 2.68L3.48 4.81Z" fill="#f5a020"/><circle cx="9" cy="8.200" r="5.700" fill="#f6b02e"/><path d="M5.500 6.500a4 4 0 0 1 7-1" stroke="#fbe3a0" stroke-width="0.900" fill="none"/><path d="M8.300 18h8a2.700 2.700 0 0 0 .400-5.400 3.600 3.600 0 0 0-6.700-.900 3.200 3.200 0 0 0-1.700 6.300z" fill="#e4e6e8"/></svg>
<div class="t" id="lt2" style="left:406.60px;top:9.55px;font-size:19.20px;-webkit-text-stroke:0.90px #d2d6dd;color:#d2d6dd;letter-spacing:0.026px;">light = NORMAL</div>
<div class="logrow" style="left:16.4px;top:52.8px"><i></i><span>2021-03-06 16:54:22 temperature=23.40 humidity=37.90 heat_index=22.78 soil_moisture=0 hei</span></div>
<div class="logrow" style="left:16.4px;top:79.2px"><i></i><span>2021-03-06 16:52:20 temperature=23.40 humidity=38.50 heat_index=22.80 soil_moisture=0 hei</span></div>
<div class="logrow" style="left:16.4px;top:105.6px"><i></i><span>2021-03-06 16:50:13 temperature=23.50 humidity=37.30 heat_index=22.88 soil_moisture=0 hei</span></div>
<div class="logrow" style="left:16.4px;top:132.0px"><i></i><span>2021-03-06 16:46:09 temperature=23.50 humidity=37.00 heat_index=22.87 soil_moisture=0 hei</span></div>
<div class="logrow" style="left:16.4px;top:158.4px"><i></i><span>2021-03-06 16:44:07 temperature=23.50 humidity=37.30 heat_index=22.88 soil_moisture=0 hei</span></div>
<div class="logrow" style="left:16.4px;top:184.8px"><i></i><span>2021-03-06 16:42:05 temperature=23.60 humidity=37.90 heat_index=23.00 soil_moisture=0 hei</span></div>
<div class="logrow" style="left:16.4px;top:211.1px"><i></i><span>2021-03-06 16:40:03 temperature=23.50 humidity=36.40 heat_index=22.86 soil_moisture=0 hei</span></div>
<div class="abs" style="left:16.400px;top:238.7px;width:4.500px;height:2.500px;background:#7eb26d"></div>
</div>
<div class="panel" style="left:106.0px;top:1056.2px;width:929.500px;height:252.3px;overflow:hidden">
<svg style="left:388.0px;top:10.500px" width="19" height="19" viewBox="0 0 19 19"><path d="M9.50 -0.20L11.10 2.50L7.90 2.50ZM16.36 2.64L15.58 5.68L13.32 3.42ZM19.20 9.50L16.50 11.10L16.50 7.90ZM16.36 16.36L13.32 15.58L15.58 13.32ZM9.50 19.20L7.90 16.50L11.10 16.50ZM2.64 16.36L3.42 13.32L5.68 15.58ZM-0.20 9.50L2.50 7.90L2.50 11.10ZM2.64 2.64L5.68 3.42L3.42 5.68Z" fill="#f5a020"/><circle cx="9.500" cy="9.500" r="6.300" fill="#f6b02e"/><path d="M6 7a4.200 4.200 0 0 1 7 0" stroke="#fbe3a0" stroke-width="0.900" fill="none"/></svg>
<div class="t" id="lt3" style="left:412.50px;top:9.55px;font-size:19.20px;-webkit-text-stroke:0.90px #d2d6dd;color:#d2d6dd;letter-spacing:-0.151px;">light = BRIGHT</div>
<div class="logrow" style="left:16.4px;top:52.8px"><i></i><span>2021-03-06 15:59:15 temperature=23.60 humidity=34.70 heat_index=22.92 soil_moisture=0 hei</span></div>
<div class="logrow" style="left:16.4px;top:79.2px"><i></i><span>2021-03-06 15:57:13 temperature=23.60 humidity=34.60 heat_index=22.92 soil_moisture=0 hei</span></div>
</div>
<div class="panel" style="left:1047.2px;top:1056.2px;width:929.500px;height:252.3px;overflow:hidden">
<svg style="left:361.6px;top:10px" width="19.500" height="19.500" viewBox="0 0 20 20"><circle cx="10" cy="10" r="9.700" fill="#f2a93a"/><circle cx="10" cy="10.400" r="8.800" fill="#f7bd45"/><path d="M3.500 3.800a9 9 0 0 1 13 0" stroke="#fbe9b0" stroke-width="1" fill="none"/><path d="M1 6.300h18v1.200h-1v1.700c0 1.700-1.400 2.900-3.300 2.900s-3.400-1.200-3.700-2.900l-.300-1.200h-1.400l-.300 1.200c-.300 1.700-1.800 2.900-3.700 2.900S2 10.900 2 9.200V7.500H1z" fill="#26292b"/><path d="M6.300 14.600c2.300 1.500 5.100 1.500 7.400 0" stroke="#8a5a14" stroke-width="1.200" fill="none" stroke-linecap="round"/></svg>
<div class="t" id="lt4" style="left:386.40px;top:9.55px;font-size:19.20px;-webkit-text-stroke:0.90px #d2d6dd;color:#d2d6dd;letter-spacing:-0.375px;">light = VERY BRIGHT</div>
<div class="logrow" style="left:16.4px;top:52.8px"><i></i><span>2021-03-06 15:53:08 temperature=23.90 humidity=34.50 heat_index=23.25 soil_moisture=0 hei</span></div>
<div class="logrow" style="left:16.4px;top:79.2px"><i></i><span>2021-03-06 15:51:06 temperature=23.90 humidity=34.40 heat_index=23.24 soil_moisture=0 hei</span></div>
</div>
<div class="abs" style="left:0;top:1139px;width:1999px;height:1px;background:#f4f4f4"></div>
</body></html>
